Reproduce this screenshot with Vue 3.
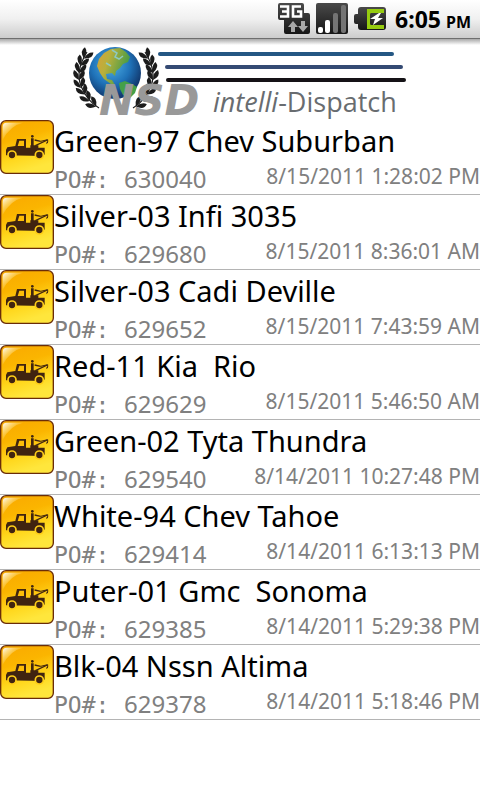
<script setup>
import { ref } from 'vue';

const time = ref('6:05');
const period = ref('PM');

const orders = ref([
    { po: '630040', vehicle: 'Green-97 Chev Suburban', date: '8/15/2011 1:28:02 PM' },
    { po: '629680', vehicle: 'Silver-03 Infi 3035', date: '8/15/2011 8:36:01 AM' },
    { po: '629652', vehicle: 'Silver-03 Cadi Deville', date: '8/15/2011 7:43:59 AM' },
    { po: '629629', vehicle: 'Red-11 Kia  Rio', date: '8/15/2011 5:46:50 AM' },
    { po: '629540', vehicle: 'Green-02 Tyta Thundra', date: '8/14/2011 10:27:48 PM' },
    { po: '629414', vehicle: 'White-94 Chev Tahoe', date: '8/14/2011 6:13:13 PM' },
    { po: '629385', vehicle: 'Puter-01 Gmc  Sonoma', date: '8/14/2011 5:29:38 PM' },
    { po: '629378', vehicle: 'Blk-04 Nssn Altima', date: '8/14/2011 5:18:46 PM' }
]);

// left half of the wreath, one entry per leaf pair
const leaves = [
    { x: 16, y: 16, angle: 32 },
    { x: 12, y: 23, angle: 24 },
    { x: 10, y: 30, angle: 12 },
    { x: 9, y: 37, angle: 0 },
    { x: 10, y: 45, angle: -14 },
    { x: 13, y: 52, angle: -28 },
    { x: 17, y: 59, angle: -40 },
    { x: 23, y: 65, angle: -52 }
];
</script>

<template>
    <div class="screen">
        <svg class="defs" width="0" height="0" aria-hidden="true">
            <defs>
                <linearGradient id="dark" x1="0" y1="0" x2="0" y2="1">
                    <stop offset="0" stop-color="#4a4a4a" />
                    <stop offset="1" stop-color="#161616" />
                </linearGradient>
                <linearGradient id="amber" x1="0" y1="0" x2="0.3" y2="1">
                    <stop offset="0" stop-color="#f9a800" />
                    <stop offset="0.4" stop-color="#fbb500" />
                    <stop offset="0.75" stop-color="#ffd81e" />
                    <stop offset="1" stop-color="#ffe63c" />
                </linearGradient>
                <linearGradient id="shine" x1="0" y1="0" x2="0.6" y2="0.6">
                    <stop offset="0" stop-color="#ffffff" />
                    <stop offset="1" stop-color="#ffe680" stop-opacity="0" />
                </linearGradient>
                <radialGradient id="ocean" cx="42%" cy="35%" r="62%">
                    <stop offset="0" stop-color="#4fb0e6" />
                    <stop offset="0.6" stop-color="#1f72b8" />
                    <stop offset="1" stop-color="#123a70" />
                </radialGradient>
                <linearGradient id="land" x1="0" y1="0" x2="1" y2="0.4">
                    <stop offset="0" stop-color="#d9a13a" />
                    <stop offset="0.4" stop-color="#b8b03c" />
                    <stop offset="1" stop-color="#3f9a48" />
                </linearGradient>
            </defs>
        </svg>

        <div class="status-bar">
            <svg width="32" height="32" viewBox="0 0 32 32">
                <path d="M2 0h22q2 0 2 2v8h4q2 0 2 2v17q0 2-2 2H8q-2 0-2-2V17H2q-2 0-2-2V2q0-2 2-2z" fill="url(#dark)" />
                <path d="M2 3.500h8v10H2M4 8.500h6M23 3.500h-8v10h8v-5h-4" fill="none" stroke="#fff" stroke-width="2.600" />
                <path d="M15 18l5 6h-3v5h-4v-5h-3z" fill="#a8a8a8" />
                <path d="M25 29l-5-6h3v-5h4v5h3z" fill="#a8a8a8" />
            </svg>
            <svg width="32" height="32" viewBox="0 0 32 32">
                <rect width="32" height="31" rx="2" fill="url(#dark)" />
                <rect x="2" y="24" width="5" height="6" rx="2" fill="#fff" />
                <rect x="9" y="17" width="5" height="13" rx="2" fill="#fff" />
                <rect x="17" y="10" width="5" height="20" rx="2" fill="#747474" />
                <rect x="25" y="2" width="5" height="28" rx="2" fill="#747474" />
            </svg>
            <svg width="32" height="24" viewBox="0 0 32 24">
                <path d="M7 0h22q3 0 3 3v17q0 3-3 3H7q-3 0-3-3v-3H2q-2 0-2-2V9q0-2 2-2h2V3q0-3 3-3z" fill="url(#dark)" />
                <path d="M13 2h17v4H17q-1 0-1 2v8q0 2 1 2h13v4H13z" fill="#96cc10" />
                <path d="M25 6l-9 6h5l-2 6 10-7h-5l3-5z" fill="#fff" />
            </svg>
            <span class="clock">{{ time }}<span class="period">{{ period }}</span></span>
        </div>

        <header class="banner">
            <svg class="logo" width="340" height="81" viewBox="0 0 340 81" role="img" aria-label="NSD intelli-Dispatch">
                <g v-for="side in ['left', 'right']" :key="side" :transform="side === 'right' ? 'translate(92 0) scale(-1 1)' : null">
                    <path d="M17 13Q5 32 11 47T29 69" fill="none" stroke="#1c1c1c" stroke-width="1.200" />
                    <g v-for="leaf in leaves" :key="leaf.y" :transform="`translate(${leaf.x} ${leaf.y}) rotate(${leaf.angle})`">
                        <path d="M0 4Q-8 0-5-6Q0-4 0 4z" fill="#1c1c1c" />
                        <path d="M0 4Q8 0 5-6Q0-4 0 4z" fill="#1c1c1c" />
                    </g>
                </g>
                <circle cx="45" cy="34" r="26" fill="url(#ocean)" />
                <path d="M29 20l5-6 7-4 9-1 6 4 4 5-2 5-5 2-3 4-4 3-1 5-3-3-6 1 1 5 5 1 3 5-4-1-7-5-4-6-3-7z" fill="url(#land)" />
                <path d="M49 44l6-2 7 3 5 3-2 6-5 5-7-3-3-6z" fill="#45a048" />
                <path d="M42 11l5 3-2 4 4 2 4-3M36 24l5 3" fill="none" stroke="#8ec9c0" stroke-width="1.500" />
                <path d="M90 15h232" stroke="#245783" stroke-width="4" stroke-linecap="round" />
                <path d="M97 28h234" stroke="#344a73" stroke-width="4" stroke-linecap="round" />
                <path d="M98 41h236" stroke="#151216" stroke-width="4" stroke-linecap="round" />
                <text class="brand" x="29" y="76">NSD</text>
                <text class="product" x="143" y="73"><tspan font-style="italic">intelli</tspan>-Dispatch</text>
            </svg>
        </header>

        <ul class="orders">
            <li v-for="order in orders" :key="order.po" class="order">
                <svg class="truck" width="54" height="54" viewBox="0 0 162 162" aria-hidden="true">
                    <rect x="2" y="2" width="158" height="158" rx="16" fill="url(#amber)" stroke="#6a2c08" stroke-width="4" />
                    <path d="M8 60V20Q8 8 20 8H70Q30 16 8 60z" fill="url(#shine)" />
                    <path d="M18 106V90l4-8 24-4 5-21h27v26h56v19l-3 6z" fill="#402410" />
                    <path d="M58 62h14v16H53z" fill="#fdbd08" />
                    <circle cx="36" cy="105" r="12" fill="#402410" stroke="#ffce18" stroke-width="5" />
                    <circle cx="118" cy="105" r="12" fill="#402410" stroke="#ffce18" stroke-width="5" />
                    <path d="M97 55v28M91 80h24" stroke="#402410" stroke-width="8" />
                    <circle cx="97" cy="49" r="4" fill="#402410" />
                    <path d="M104 60l18 4M106 77l36-17" stroke="#402410" stroke-width="4" />
                    <path d="M122 64l21-5v7q0 5-5 3" fill="none" stroke="#402410" stroke-width="3" />
                </svg>
                <div class="order-info">
                    <h2 class="vehicle">{{ order.vehicle }}</h2>
                    <div class="details">
                        <span class="po"><span class="po-label">PO#:</span>{{ order.po }}</span>
                        <span class="date">{{ order.date }}</span>
                    </div>
                </div>
            </li>
        </ul>
    </div>
</template>

<style>
body {
    margin: 0;
    background-color: #ffffff;
}
</style>

<style scoped>
.screen {
    font-family: "Noto Sans", "Open Sans", sans-serif;
    color: #000000;
}

.defs {
    position: absolute;
}

.status-bar {
    display: flex;
    align-items: center;
    justify-content: flex-end;
    gap: 6px;
    height: 38px;
    padding-right: 9px;
    border-bottom: 1px solid #6e6e6e;
    background: linear-gradient(#ffffff, #f0f0f0 50%, #cccccc);
}

.clock {
    margin-left: 3px;
    font-size: 23px;
    font-weight: 700;
}

.period {
    margin-left: 5px;
    font-size: 16px;
}

.banner {
    display: flex;
    justify-content: center;
    height: 81px;
    background: linear-gradient(#a8a8a8, #ffffff 6px);
}

.logo {
    overflow: visible;
}

.brand {
    font-family: "DejaVu Sans", sans-serif;
    font-size: 42px;
    font-style: italic;
    font-weight: 700;
    fill: #999999;
}

.product {
    font-family: "Open Sans", sans-serif;
    font-size: 27px;
    font-weight: 500;
    fill: #686c70;
}

.orders {
    margin: 0;
    padding: 0;
    list-style: none;
}

.order {
    display: flex;
    align-items: flex-start;
    border-bottom: 1px solid #b4b4b4;
}

.order-info {
    flex: 1;
}

.vehicle {
    margin: 0;
    font-size: 29px;
    font-weight: 400;
    line-height: 42px;
    white-space: pre;
}

.details {
    display: flex;
    justify-content: space-between;
    height: 32px;
    color: #808080;
    line-height: 28px;
}

.po {
    display: flex;
    align-items: baseline;
    padding-top: 2px;
    font-size: 24px;
    line-height: 29px;
}

.po-label {
    width: 70px;
    font-family: "DejaVu Sans Mono", monospace;
    font-size: 23px;
}

.date {
    font-size: 21px;
}
</style>
